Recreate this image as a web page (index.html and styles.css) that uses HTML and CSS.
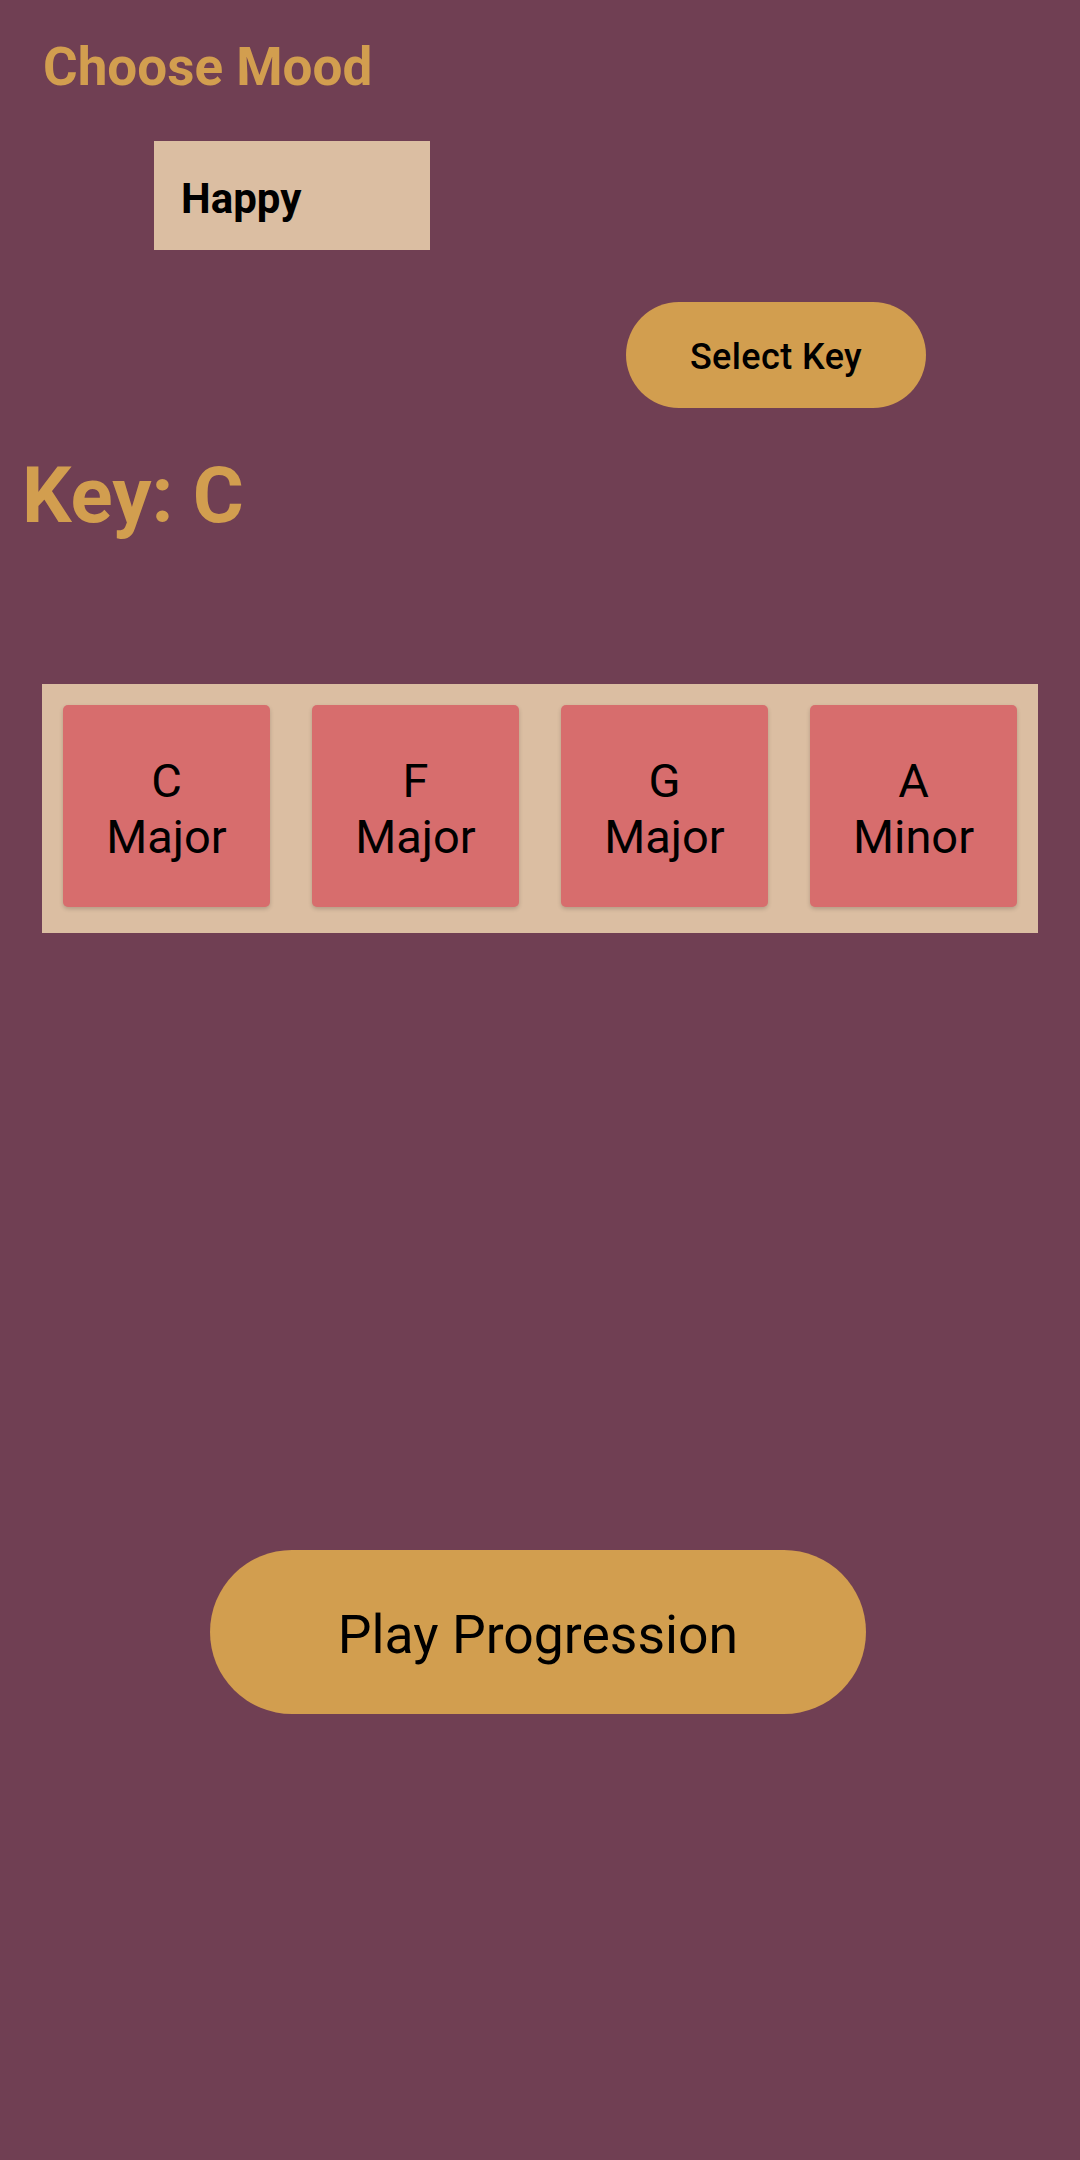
FILE: index.html
```html
<!DOCTYPE html>
<html lang="en">
<head>
<meta charset="utf-8">
<title>Chord Progression</title>
<link rel="stylesheet" href="styles.css">
</head>
<body>
<main class="screen">
  <h1 class="title">Choose Mood</h1>
  <div class="mood-select">Happy</div>
  <div class="key-row">
    <button class="btn-select-key">Select Key</button>
  </div>
  <h2 class="key-label">Key: C</h2>
  <section class="chords">
    <div class="chord">C<br>Major</div>
    <div class="chord">F<br>Major</div>
    <div class="chord">G<br>Major</div>
    <div class="chord">A<br>Minor</div>
  </section>
  <div class="play-row">
    <button class="btn-play">Play Progression</button>
  </div>
</main>
</body>
</html>
```

FILE: styles.css
```css
html, body {
  margin: 0;
  padding: 0;
}
body {
  background: #703f53;
  font-family: Roboto, "Liberation Sans", sans-serif;
  width: 1080px;
  min-height: 2160px;
}
.screen {
  display: flex;
  flex-direction: column;
  padding-top: 36px;
}
.title {
  margin: 0 0 0 43px;
  font-size: 53px;
  line-height: 62px;
  font-weight: 700;
  color: #d29e4f;
}
.mood-select {
  margin: 43px 0 0 154px;
  width: 276px;
  height: 109px;
  box-sizing: border-box;
  padding: 33px 0 0 27px;
  background: #dbbea2;
  color: #000;
  font-size: 42px;
  line-height: 49px;
  font-weight: 700;
}
.key-row {
  display: flex;
  margin-top: 52px;
  padding-left: 626px;
}
.btn-select-key {
  width: 300px;
  height: 106px;
  border: none;
  border-radius: 53px;
  background: #d29e4f;
  color: #000;
  font-family: Roboto, "Liberation Sans", sans-serif;
  font-size: 36px;
  font-weight: 500;
  line-height: 42px;
  letter-spacing: 0.4px;
  padding: 3px 0 0;
}
.key-label {
  margin: 42px 0 0 22px;
  font-size: 78px;
  line-height: 92px;
  font-weight: 700;
  color: #d29e4f;
}
.chords {
  display: flex;
  margin: 142px 42px 0;
  padding: 21px 0 26px;
  background: #dbbea2;
}
.chord {
  width: 207px;
  height: 202px;
  margin: 0 21px;
  display: flex;
  align-items: center;
  justify-content: center;
  text-align: center;
  background: #d76d6d;
  border-radius: 5px;
  box-shadow: 0 2px 4px rgba(0, 0, 0, 0.18);
  color: #000;
  font-size: 47px;
  line-height: 56px;
  padding-top: 6px;
  box-sizing: border-box;
}
.play-row {
  display: flex;
  margin-top: 617px;
  padding-left: 210px;
}
.btn-play {
  width: 656px;
  height: 164px;
  border: none;
  border-radius: 82px;
  background: #d29e4f;
  color: #000;
  font-family: Roboto, "Liberation Sans", sans-serif;
  font-size: 53.5px;
  font-weight: 400;
  line-height: 63px;
  padding: 5px 0 0;
}
```
